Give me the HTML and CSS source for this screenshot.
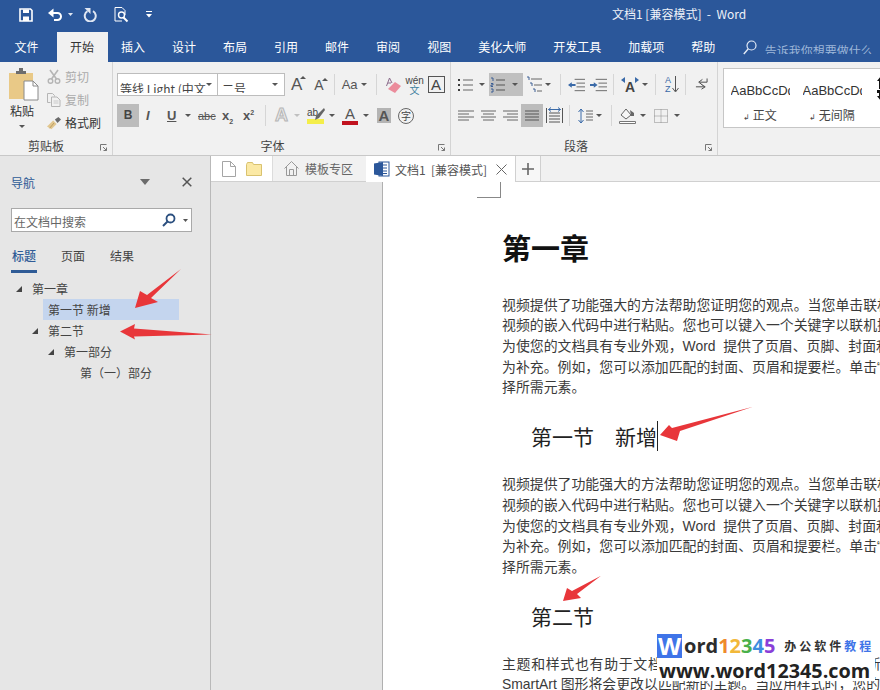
FILE: index.html
```html
<!DOCTYPE html>
<html lang="zh-CN">
<head>
<meta charset="utf-8">
<title>文档1 [兼容模式] - Word</title>
<link rel="stylesheet" href="styles.css">
</head>
<body>
<div class="app">
  <header class="titlebar">
    <div class="qat">
      <svg class="q-save" width="14" height="14" viewBox="0 0 14 14"><path d="M1 1h10.500L13 2.500V13H1z" fill="none" stroke="#fff" stroke-width="1.600"/><path d="M4 1.500h6V5H4zM4 8.500h6V13H4z" fill="#fff"/></svg>
      <svg class="q-undo" width="15" height="13" viewBox="0 0 15 13"><path d="M2 5h7.500a3.500 3.500 0 0 1 0 7H6" fill="none" stroke="#fff" stroke-width="2"/><path d="M5.500 .5v9L0 5z" fill="#fff"/></svg>
      <svg class="q-car" width="5" height="3" viewBox="0 0 5 3"><path d="M0 0h5L2.500 3z" fill="#dfe6f2"/></svg>
      <svg class="q-redo" width="14" height="14" viewBox="0 0 14 14"><path d="M4.500 3.200a5.500 5.500 0 1 0 5.500 0" fill="none" stroke="#dfe6f2" stroke-width="2"/><path d="M1.500 0h6v6z" fill="#dfe6f2"/></svg>
      <svg class="q-prev" width="15" height="16" viewBox="0 0 15 16"><path d="M1 .5h7l3 3V8M1 .5v13.500h7" fill="none" stroke="#fff"/><circle cx="7.500" cy="8" r="3" fill="none" stroke="#fff" stroke-width="1.400"/><path d="M9.500 10.500l4 4" stroke="#fff" stroke-width="2"/></svg>
      <svg class="q-cust" width="6" height="7" viewBox="0 0 6 7"><path d="M0 .5h6" stroke="#fff"/><path d="M0 3h6L3 6.500z" fill="#fff"/></svg>
    </div>
    <div class="doc-title">文档1 [兼容模式] &nbsp;-&nbsp; Word</div>
  </header>

  <nav class="tabs">
    <span class="tab first">文件</span><span class="tab active">开始</span><span class="tab">插入</span><span class="tab">设计</span><span class="tab">布局</span><span class="tab">引用</span><span class="tab">邮件</span><span class="tab">审阅</span><span class="tab">视图</span><span class="tab">美化大师</span><span class="tab">开发工具</span><span class="tab">加载项</span><span class="tab">帮助</span>
    <svg class="tell-icon" width="14" height="15" viewBox="0 0 14 15"><circle cx="8.500" cy="5.500" r="4.500" fill="none" stroke="#e4ebf6" stroke-width="1.200"/><path d="M5.300 8.800L.8 14" stroke="#e4ebf6" stroke-width="1.400"/></svg>
    <span class="tell">告诉我你想要做什么</span>
  </nav>

  <section class="ribbon">
    <div class="group g-clip">
      <div class="clip-body">
        <div class="paste">
          <svg class="paste-ico" width="30" height="33" viewBox="0 0 30 33"><rect x="0" y="5" width="24" height="26" fill="#e9c987"/><path d="M7 6V3h3V0h4v3h3v3z" fill="#6d6d6d"/><path d="M15 13h9l5 5v14H15z" fill="#fff" stroke="#8a8a8a"/><path d="M24 13v5h5" fill="none" stroke="#8a8a8a"/></svg>
          <span class="paste-label">粘贴</span>
          <svg class="caret" width="6" height="3" viewBox="0 0 6 3"><path d="M0 0h6L3 3z"/></svg>
        </div>
        <div class="clip-tools">
          <div class="clip-row dis">
            <svg width="14" height="15" viewBox="0 0 14 15"><path d="M3 1l6.500 9M11 1L4.500 10" stroke="#b5b5b5" stroke-width="1.600" fill="none"/><circle cx="3.500" cy="12" r="2.300" fill="none" stroke="#b5b5b5" stroke-width="1.400"/><circle cx="10.500" cy="12" r="2.300" fill="none" stroke="#b5b5b5" stroke-width="1.400"/></svg>
            <span>剪切</span>
          </div>
          <div class="clip-row dis">
            <svg width="14" height="14" viewBox="0 0 14 14"><path d="M.5.500h5l2 2v1M.5.500v9h3" fill="none" stroke="#b5b5b5"/><path d="M4.500 4h5.500l3 3v6.500H4.500z" fill="none" stroke="#b5b5b5"/><path d="M6.500 8h5M6.500 10h5" stroke="#c9c9c9"/></svg>
            <span>复制</span>
          </div>
          <div class="clip-row">
            <svg width="14" height="14" viewBox="0 0 16 14"><path d="M0 11l7-7 4 4-6 6z" fill="#e2c78f"/><path d="M9 3l4-3 3 3-4 4z" fill="#6a6a6a"/><path d="M3 13L8 7" stroke="#b6975a"/></svg>
            <span>格式刷</span>
          </div>
        </div>
      </div>
      <div class="group-label">剪贴板</div>
      <svg class="launch" width="7" height="7" viewBox="0 0 7 7"><path d="M.5 6.500V.5h6M3 3l3.500 3.500M6.500 3.500v3h-3" fill="none" stroke="#777"/></svg>
    </div>

    <div class="group g-font">
      <div class="row">
        <div class="combo c-font"><span class="combo-text">等线 Light (中文</span><svg class="caret" width="6" height="3" viewBox="0 0 6 3"><path d="M0 0h6L3 3z"/></svg></div>
        <div class="combo c-size"><span class="combo-text">二号</span><svg class="caret" width="6" height="3" viewBox="0 0 6 3"><path d="M0 0h6L3 3z"/></svg></div>
        <span class="letter big m6">A<i class="up"></i></span>
        <span class="letter mid m8">A<i class="up"></i></span>
        <span class="sep m6"></span>
        <span class="letter aa m7">Aa</span>
        <svg class="caret m3" width="6" height="3" viewBox="0 0 6 3"><path d="M0 0h6L3 3z"/></svg>
        <span class="sep m9"></span>
        <svg class="m9" width="15" height="16" viewBox="0 0 15 16"><path d="M2 12l7-7 6 4-6 7z" fill="#eb8c9c"/><path d="M.5 9L3.500 1 6 6M2 6h3" fill="none" stroke="#8a6a8a"/></svg>
        <span class="wen m6"><b>wén</b><b class="wen-zh">文</b></span>
        <span class="boxed-a m5">A</span>
      </div>
      <div class="row">
        <span class="fmt on">B</span>
        <span class="letter ital m7">I</span>
        <span class="letter und m13">U</span>
        <svg class="caret m9" width="6" height="3" viewBox="0 0 6 3"><path d="M0 0h6L3 3z"/></svg>
        <span class="letter abc m7">abc</span>
        <span class="letter script m8">x<sub>2</sub></span>
        <span class="letter script m8">x<sup>2</sup></span>
        <span class="sep m9"></span>
        <span class="letter fx m9">A</span>
        <svg class="caret faint m5" width="6" height="3" viewBox="0 0 6 3"><path d="M0 0h6L3 3z"/></svg>
        <span class="hl m7"><b>ab</b><i></i><svg class="pen" width="10" height="12" viewBox="0 0 10 12"><path d="M9 0l1 2-6 8-4 2 1-4z" fill="#666"/></svg></span>
        <svg class="caret m4" width="6" height="3" viewBox="0 0 6 3"><path d="M0 0h6L3 3z"/></svg>
        <span class="letter colour m7">A</span>
        <svg class="caret m5" width="6" height="3" viewBox="0 0 6 3"><path d="M0 0h6L3 3z"/></svg>
        <span class="letter shade m8">A</span>
        <span class="circled m7">字</span>
      </div>
      <div class="group-label">字体</div>
      <svg class="launch" width="7" height="7" viewBox="0 0 7 7"><path d="M.5 6.500V.5h6M3 3l3.500 3.500M6.500 3.500v3h-3" fill="none" stroke="#777"/></svg>
    </div>

    <div class="group g-para">
      <div class="row">
        <svg width="15" height="16" viewBox="0 0 15 16"><path d="M0 2h2v2H0zM0 7h2v2H0zM0 12h2v2H0z" fill="#3d3d3d"/><path d="M5 3h10M5 8h10M5 13h10" stroke="#666"/></svg>
        <svg class="caret m6" width="6" height="3" viewBox="0 0 6 3"><path d="M0 0h6L3 3z"/></svg>
        <span class="num-on m4"><svg width="15" height="16" viewBox="0 0 15 16"><path d="M1 1h2v3M1 6.500h2v1.500H1v1.500h2M1 12h2v3H1" fill="none" stroke="#3d5f94"/><path d="M6 3h9M6 8h9M6 13h9" stroke="#555"/></svg><svg class="caret" width="6" height="3" viewBox="0 0 6 3"><path d="M0 0h6L3 3z"/></svg></span>
        <svg class="m3" width="16" height="17" viewBox="0 0 16 17"><path d="M1 1h2v3M4 7h2v3M7 13h2v3" fill="none" stroke="#3d5f94"/><path d="M5 3h11M8 9h8M11 15h5" stroke="#666"/></svg>
        <svg class="caret m3" width="6" height="3" viewBox="0 0 6 3"><path d="M0 0h6L3 3z"/></svg>
        <span class="sep m9"></span>
        <svg class="m7" width="17" height="14" viewBox="0 0 18 14"><path d="M7 1h11M9 5h9M9 9h9M7 13h11" stroke="#666"/><path d="M0 7l4-3v2h4v2H4v2z" fill="#3a6aa8"/></svg>
        <svg class="m5" width="17" height="14" viewBox="0 0 18 14"><path d="M6 1h12M9 5h9M9 9h9M6 13h12" stroke="#666"/><path d="M8 7L4 4v2H0v2h4v2z" fill="#3a6aa8"/></svg>
        <span class="sep m6"></span>
        <span class="dir m7"><span class="dir-a"><svg width="18" height="6" viewBox="0 0 18 6"><path d="M4 0L0 3l4 3zM14 0l4 3-4 3z" fill="#3a6aa8"/></svg><b>A</b></span><svg class="caret" width="6" height="3" viewBox="0 0 6 3"><path d="M0 0h6L3 3z"/></svg></span>
        <span class="sep m7"></span>
        <span class="sort m9"><b>A<br>Z</b><svg width="7" height="17" viewBox="0 0 7 17"><path d="M3.500 0v15M.5 12l3 4 3-4" fill="none" stroke="#555"/></svg></span>
        <span class="sep m6"></span>
        <svg class="m9" width="13" height="15" viewBox="0 0 14 15"><path d="M13 1v4H5M8 2L4 5l4 3M1 10h9M7 7.500l4 2.500-4 2.500" fill="none" stroke="#444"/></svg>
      </div>
      <div class="row">
        <svg width="16" height="12" viewBox="0 0 16 12"><path d="M0 1h16M0 4h11M0 7h16M0 10h11" stroke="#666"/></svg>
        <svg class="m7" width="15" height="12" viewBox="0 0 15 12"><path d="M0 1h15M2 4h11M0 7h15M2 10h11" stroke="#666"/></svg>
        <svg class="m7" width="15" height="12" viewBox="0 0 15 12"><path d="M0 1h15M4 4h11M0 7h15M4 10h11" stroke="#666"/></svg>
        <span class="just m3"><svg width="14" height="12" viewBox="0 0 14 12"><path d="M0 1h14M0 4h14M0 7h14M0 10h14" stroke="#555"/></svg></span>
        <svg class="m3" width="17" height="17" viewBox="0 0 17 17"><path d="M.5 1v15M16.500 1v15" stroke="#555"/><path d="M3 6h11M3 9h11M3 12h11M3 15h11" stroke="#555"/><path d="M2.500 2.500h12M5 .5l-2.500 2 2.500 2M12 .5l2.500 2-2.500 2" fill="none" stroke="#3a6aa8"/></svg>
        <span class="sep m6"></span>
        <svg class="m8" width="15" height="16" viewBox="0 0 15 16"><path d="M3 1v14M.5 4L3 1l2.500 3M.5 12L3 15l2.500-3" fill="none" stroke="#3a6aa8"/><path d="M8 3h7M8 6h7M8 9h7M8 12h7" stroke="#666"/></svg>
        <svg class="caret m3" width="6" height="3" viewBox="0 0 6 3"><path d="M0 0h6L3 3z"/></svg>
        <span class="sep m9"></span>
        <svg class="m7" width="17" height="17" viewBox="0 0 17 17"><path d="M2 8l5-6 5 6-5 4z" fill="#f7f7f7" stroke="#666"/><path d="M11 3l4 3v3h-3z" fill="#666"/><path d="M.5 14.500h16v2H.5z" fill="#fff" stroke="#777"/></svg>
        <svg class="caret m4" width="6" height="3" viewBox="0 0 6 3"><path d="M0 0h6L3 3z"/></svg>
        <svg class="m8" width="14" height="14" viewBox="0 0 14 14"><path d="M.5.500h13v13H.5zM7 .5v13M.5 7h13" fill="none" stroke="#888" stroke-dasharray="1 1"/></svg>
        <svg class="caret m6" width="6" height="3" viewBox="0 0 6 3"><path d="M0 0h6L3 3z"/></svg>
      </div>
      <div class="group-label">段落</div>
      <svg class="launch" width="7" height="7" viewBox="0 0 7 7"><path d="M.5 6.500V.5h6M3 3l3.500 3.500M6.500 3.500v3h-3" fill="none" stroke="#777"/></svg>
    </div>

    <div class="gallery">
      <div class="style-item"><span class="sample">AaBbCcDd</span><span class="style-name"><i>↲</i> 正文</span></div>
      <div class="style-item"><span class="sample">AaBbCcDd</span><span class="style-name"><i>↲</i> 无间隔</span></div>
      <svg class="more-style" width="8" height="26" viewBox="0 0 8 26"><path d="M4 0L8 5H5v5h3v3H2V5H0zM0 14h6v6h2l-4 5-4-5h2v-3H0z" fill="#111"/></svg>
    </div>
  </section>

  <main class="main">
    <aside class="nav">
      <div class="nav-head">
        <span class="nav-title">导航</span>
        <svg class="nav-menu" width="10" height="6" viewBox="0 0 10 6"><path d="M0 0h10L5 6z" fill="#6b6b6b"/></svg>
        <svg class="nav-close" width="10" height="10" viewBox="0 0 10 10"><path d="M.7.7l8.600 8.600M9.300.7L.7 9.300" stroke="#555" stroke-width="1.500"/></svg>
      </div>
      <div class="search">
        <span class="search-text">在文档中搜索</span>
        <svg width="14" height="14" viewBox="0 0 14 14"><circle cx="8.500" cy="5.500" r="4" fill="none" stroke="#2b4f7f" stroke-width="1.800"/><path d="M5.500 8.500L1 13" stroke="#2b4f7f" stroke-width="2"/></svg>
        <svg class="caret" width="5" height="3" viewBox="0 0 5 3"><path d="M0 0h5L2.500 3z"/></svg>
      </div>
      <div class="nav-tabs">
        <span class="nav-tab current">标题</span><span class="nav-tab">页面</span><span class="nav-tab">结果</span>
      </div>
      <ul class="tree">
        <li class="lv1"><i class="tw"></i>第一章</li>
        <li class="lv2 selected">第一节 新增</li>
        <li class="lv2"><i class="tw"></i>第二节</li>
        <li class="lv3"><i class="tw"></i>第一部分</li>
        <li class="lv4">第（一）部分</li>
      </ul>
    </aside>

    <div class="work">
      <div class="doc-tabs">
        <div class="dt-tools">
          <svg width="14" height="16" viewBox="0 0 14 16"><path d="M.5.500h8l5 5v10H.5z" fill="#fff" stroke="#a5a5a5"/><path d="M8.500.5v5h5" fill="none" stroke="#a5a5a5"/></svg>
          <svg width="16" height="14" viewBox="0 0 16 14"><path d="M.5 13.500V2.500l1-2h5l1 2h8v11z" fill="#fbe9a5" stroke="#d9c26f"/></svg>
        </div>
        <div class="dt-tab">
          <svg width="15" height="15" viewBox="0 0 15 15"><path d="M.5 7.500L7.500.5l7 7" fill="none" stroke="#999"/><path d="M2.500 6v8.500h10V6M5.500 14.500v-6h4v6" fill="none" stroke="#999"/></svg>
          <span>模板专区</span>
        </div>
        <div class="dt-tab open">
          <svg width="16" height="16" viewBox="0 0 16 16"><rect x="5" y="1" width="10" height="14" fill="#fff" stroke="#2b579a"/><path d="M9 4h4M9 7h4M9 10h4M9 12.500h4" stroke="#2b579a"/><path d="M0 2.500l9-1.500v14L0 13.500z" fill="#2b579a"/></svg>
          <span>文档1&nbsp; [兼容模式]</span>
          <svg class="dt-x" width="11" height="11" viewBox="0 0 11 11"><path d="M.5.500l10 10M10.500.5l-10 10" stroke="#666"/></svg>
        </div>
        <div class="dt-plus"><svg width="12" height="12" viewBox="0 0 12 12"><path d="M6 0v12M0 6h12" stroke="#666" stroke-width="1.600"/></svg></div>
      </div>
      <div class="work-body">
        <div class="gutter"></div>
        <article class="page">
          <div class="crop"></div>
          <h1>第一章</h1>
          <p>视频提供了功能强大的方法帮助您证明您的观点。当您单击联机视频时，可以在想要添加的<br>视频的嵌入代码中进行粘贴。您也可以键入一个关键字以联机搜索最适合您的文档的视频。<br>为使您的文档具有专业外观，Word&nbsp; 提供了页眉、页脚、封面和文本框设计，这些设计可互<br>为补充。例如，您可以添加匹配的封面、页眉和提要栏。单击“插入”，然后从不同库中选<br>择所需元素。</p>
          <h2>第一节　<span class="cursor">新增</span></h2>
          <p>视频提供了功能强大的方法帮助您证明您的观点。当您单击联机视频时，可以在想要添加的<br>视频的嵌入代码中进行粘贴。您也可以键入一个关键字以联机搜索最适合您的文档的视频。<br>为使您的文档具有专业外观，Word&nbsp; 提供了页眉、页脚、封面和文本框设计，这些设计可互<br>为补充。例如，您可以添加匹配的封面、页眉和提要栏。单击“插入”，然后从不同库中选<br>择所需元素。</p>
          <h2>第二节</h2>
          <p><span class="spaced">主题和样式也有助于文档保持协调。当您单击设计并选择新的主题时，图片、图表或</span><br>SmartArt 图形将会更改以匹配新的主题。当应用样式时，您的标题会进行更改以匹配新的</p>
        </article>
      </div>
    </div>
  </main>

  <svg class="arrows" width="880" height="690" viewBox="0 0 880 690">
    <path d="M181 269L151 298 158 302 135 308 140 291 147 295z"/>
    <path d="M212 334.500L134 328.500 135 324 120 331.500 135 339.500 134 336.500z"/>
    <path d="M753 406.700L680 431 677 441 660 435 669 425 672 428z"/>
    <path d="M601 575.700L577 594 581 598 563 601 567 588 572 591z"/>
  </svg>

  <div class="mark">
    <div class="mark-top"><span class="w">W</span><span class="ord">ord</span><span class="n1">1</span><span class="n2">2</span><span class="n3">3</span><span class="n4">4</span><span class="n5">5</span><span class="mark-cn">办公软件<em>教程</em></span></div>
    <div class="mark-url">www.word12345.com</div>
  </div>
</div>
</body>
</html>
```
FILE: styles.css
```css
* { box-sizing: border-box; }
html, body { margin: 0; padding: 0; }
body { font-family: "Noto Sans CJK SC", "Liberation Sans", sans-serif; color: #444; background: #fff; overflow: hidden; }
svg { display: block; flex: none; }
i, em { font-style: normal; }

.app { position: relative; width: 880px; height: 690px; overflow: hidden; display: flex; flex-direction: column; }

.titlebar { height: 32px; background: #2b579a; display: flex; align-items: center; flex: none; }
.qat { display: flex; align-items: center; padding-left: 19px; padding-bottom: 3px; }
.q-undo { margin-left: 15px; }
.q-car { margin-left: 5px; }
.q-redo { margin-left: 10px; }
.q-prev { margin-left: 17px; }
.q-cust { margin-left: 17px; }
.doc-title { margin-left: 460px; color: #eef2f8; font-size: 12px; white-space: nowrap; line-height: 28px; padding-bottom: 4px; }

.tabs { height: 30px; background: #2b579a; display: flex; align-items: stretch; flex: none; padding-left: 1px; }
.tab { padding: 0 13.5px; color: #fff; font-size: 12px; line-height: 29px; white-space: nowrap; flex: none; }
.tab.first { margin-right: 4.5px; }
.tab.active { background: #f1f1f1; color: #333; }
.tell-icon { align-self: center; margin-left: 14px; }
.tell { margin-left: 8px; font-size: 12px; color: #9db6d8; height: 22px; line-height: 37px; overflow: hidden; white-space: nowrap; align-self: flex-start; }

.ribbon { height: 94px; background: #f1f1f1; border-bottom: 1px solid #c8c8c8; display: flex; flex: none; overflow: hidden; }
.group { position: relative; display: flex; flex-direction: column; height: 93px; border-right: 1px solid #d4d4d4; flex: none; }
.group-label { position: absolute; left: 0; right: 0; bottom: 0; height: 18px; line-height: 18px; font-size: 12px; text-align: center; color: #444; }
.g-clip .group-label { right: 20px; }
.g-font .group-label { right: 18px; }
.g-para .group-label { right: 16px; }
.launch { position: absolute; right: 5px; bottom: 4px; }
.caret { fill: #555; }
.caret.faint { fill: #c0c0c0; }

.g-clip { width: 113px; padding-top: 3px; }
.clip-body { display: flex; }
.paste { width: 47px; display: flex; flex-direction: column; align-items: center; padding-right: 3px; padding-top: 3px; }
.paste-ico { margin-left: 4px; }
.paste-label { font-size: 12px; line-height: 18px; margin-top: 1px; color: #333; }
.paste .caret { margin-top: 5px; }
.clip-row { display: flex; align-items: center; height: 23px; font-size: 12px; gap: 4px; color: #333; white-space: nowrap; }
.clip-row.dis { color: #ababab; }

.g-font { width: 338px; padding: 11px 0 0 4px; gap: 8px; }
.g-para { width: 267px; padding: 11px 0 0 7px; gap: 8px; }
.row { display: flex; align-items: center; height: 23px; flex: none; }

.combo { height: 23px; background: #fff; border: 1px solid #bdbdbd; display: flex; align-items: center; justify-content: space-between; padding: 0 6px 0 2px; flex: none; }
.combo .caret { flex: none; }
.c-font { width: 101px; padding-right: 5px; }
.c-size { width: 67px; border-left: none; padding-left: 4px; }
.combo-text { font-size: 12px; height: 15px; line-height: 21px; overflow: hidden; white-space: nowrap; color: #444; margin-top: 2px; }
.c-font .combo-text { width: 88px; }

.m3 { margin-left: 3px; } .m4 { margin-left: 4px; } .m5 { margin-left: 5px; } .m6 { margin-left: 6px; }
.m7 { margin-left: 7px; } .m8 { margin-left: 8px; } .m9 { margin-left: 9px; } .m13 { margin-left: 13px; }

.sep { width: 1px; height: 21px; background: #d6d6d6; flex: none; }
.letter { font-family: "Liberation Sans", sans-serif; color: #555; flex: none; position: relative; }
.big { font-size: 17px; padding-right: 4px; }
.mid { font-size: 14px; padding-right: 4px; }
.up { position: absolute; right: 0; top: 1px; border-left: 3px solid transparent; border-right: 3px solid transparent; border-bottom: 3px solid #555; }
.aa { font-size: 13px; }
.wen { display: flex; flex-direction: column; align-items: center; font-family: "Liberation Sans", sans-serif; line-height: 9px; width: 16px; flex: none; }
.wen b { font-size: 10px; font-weight: 400; color: #444; }
.wen .wen-zh { font-family: "Noto Sans CJK SC", sans-serif; color: #3f7f9f; }
.boxed-a { font-family: "Liberation Sans", sans-serif; font-size: 15px; line-height: 15px; color: #444; border: 1px solid #555; width: 17px; height: 17px; text-align: center; flex: none; }

.fmt { width: 22px; height: 23px; line-height: 23px; text-align: center; font-family: "Liberation Sans", sans-serif; font-weight: 700; font-size: 12px; flex: none; }
.on { background: #bcbcbc; color: #444; }
.ital { font-style: italic; font-weight: 700; font-size: 13px; width: 8px; }
.und { font-weight: 700; font-size: 13px; text-decoration: underline; width: 9px; }
.abc { font-size: 11px; text-decoration: line-through; width: 16px; }
.script { font-size: 13px; font-weight: 700; width: 13px; line-height: 14px; }
.script sub, .script sup { font-size: 7px; line-height: 0; }
.fx { font-size: 18px; font-weight: 700; color: #e8e8e8; -webkit-text-stroke: 1px #b5b5b5; width: 14px; }
.hl { position: relative; display: flex; flex-direction: column; align-items: flex-start; width: 18px; flex: none; }
.hl b { font-family: "Liberation Sans", sans-serif; font-size: 10px; line-height: 12px; font-weight: 400; }
.hl i { width: 17px; height: 5px; background: #f4ee4a; }
.pen { position: absolute; right: 0; top: 1px; }
.colour { font-size: 15px; line-height: 15px; width: 16px; text-align: center; border-bottom: 4px solid #c1121f; }
.shade { width: 14px; height: 15px; line-height: 15px; text-align: center; background: #b4b4b4; font-size: 15px; font-weight: 700; }
.circled { width: 16px; height: 16px; border: 1px solid #666; border-radius: 50%; font-size: 10px; line-height: 14px; text-align: center; flex: none; }

.num-on { width: 34px; height: 23px; background: #c0c0c0; display: flex; align-items: center; justify-content: space-between; padding: 0 5px 0 1px; flex: none; }
.dir { display: flex; align-items: center; gap: 3px; flex: none; width: 27px; }
.dir-a { display: flex; flex-direction: column; align-items: center; width: 18px; flex: none; }
.dir-a b { font-family: "Liberation Sans", sans-serif; font-size: 14px; line-height: 10px; margin-top: -1px; }
.sort { display: flex; align-items: center; gap: 1px; flex: none; }
.sort b { font-family: "Liberation Sans", sans-serif; font-size: 9px; line-height: 9px; color: #3a6aa8; font-weight: 400; }
.just { width: 22px; height: 23px; background: #bcbcbc; display: flex; align-items: center; justify-content: center; flex: none; }

.gallery { margin-left: 5px; margin-top: 6px; height: 60px; flex: 1; min-width: 0; background: #fff; border: 1px solid #c6c6c6; border-right: none; display: flex; overflow: hidden; padding-left: 6px; }
.style-item { width: 72px; display: flex; flex-direction: column; align-items: center; flex: none; padding-right: 12px; }
.sample { font-family: "Liberation Sans", sans-serif; font-size: 13px; width: 59px; overflow: hidden; white-space: nowrap; line-height: 18px; margin-top: 13px; color: #333; }
.style-name { font-size: 12px; line-height: 18px; margin-top: 6px; white-space: nowrap; color: #444; }
.style-name i { font-size: 8px; }
.more-style { margin-top: 7px; margin-left: 3px; }

.main { flex: 1; display: flex; min-height: 0; }
.nav { width: 211px; flex: none; background: #e6e6e6; border-right: 1px solid #b9b9b9; padding: 0 0 0 11px; }
.nav-head { height: 52px; display: flex; align-items: center; }
.nav-title { font-size: 12px; color: #2f5b96; }
.nav-menu { margin-left: 105px; }
.nav-close { margin-left: 32px; }
.search { width: 181px; height: 24px; background: #fff; border: 1px solid #a9a9a9; display: flex; align-items: center; padding-left: 2px; }
.search-text { width: 148px; font-size: 12px; color: #666; height: 16px; line-height: 19px; overflow: hidden; }
.search .caret { margin-left: 7px; }
.nav-tabs { display: flex; gap: 23px; margin-top: 13px; height: 28px; }
.nav-tab { font-size: 12px; line-height: 22px; height: 28px; padding: 0 1px; color: #444; }
.nav-tab.current { color: #2f5b96; font-weight: 500; border-bottom: 3px solid #2f5b96; }
.tree { list-style: none; margin: 5px 0 0; padding: 0; font-size: 12px; }
.tree li { height: 21px; line-height: 21px; display: flex; align-items: center; white-space: nowrap; color: #444; }
.tw { width: 0; height: 0; border-left: 6px solid transparent; border-bottom: 6px solid #444; flex: none; margin-right: 10px; }
.lv1 { padding-left: 5px; }
.lv2 { padding-left: 21px; }
.lv2.selected { margin-left: 32px; padding-left: 5px; width: 136px; background: #c4d5ee; }
.lv3 { padding-left: 37px; }
.lv4 { padding-left: 69px; }

.work { flex: 1; min-width: 0; display: flex; flex-direction: column; }
.doc-tabs { height: 26px; background: #f1f1f1; border-bottom: 1px solid #d0d0d0; display: flex; flex: none; }
.dt-tools { width: 61px; background: #fff; display: flex; align-items: center; padding-left: 11px; gap: 10px; flex: none; }
.dt-tab { display: flex; align-items: center; font-size: 12px; color: #666; white-space: nowrap; flex: none; width: 94px; padding-left: 11px; gap: 6px; border-left: 1px solid #dcdcdc; }
.dt-tab.open { width: 149px; background: #fff; height: 26px; padding-left: 8px; border-left: none; color: #555; gap: 5px; }
.dt-x { margin-left: 4px; }
.dt-plus { width: 26px; background: #f7f7f7; border-left: 1px solid #d0d0d0; border-right: 1px solid #d0d0d0; display: flex; align-items: center; justify-content: center; flex: none; }
.work-body { flex: 1; display: flex; min-height: 0; }
.gutter { width: 172px; flex: none; background: #e6e6e6; border-right: 1px solid #b0b0b0; }
.page { flex: 1; min-width: 0; background: #fff; overflow: hidden; padding-left: 119px; white-space: nowrap; }
.crop { width: 24px; height: 16px; margin-left: -25px; border-right: 1px solid #888; border-bottom: 1px solid #888; }
h1 { margin: 29px 0 27.6px; font-size: 29px; line-height: 40px; font-weight: 700; color: #111; }
h2 { margin: 23px 0; padding-left: 29px; font-size: 21px; line-height: 30px; font-weight: 400; color: #222; }
.cursor { border-right: 1px solid #222; }
p { margin: 0; font-family: "Liberation Sans", "Noto Sans CJK SC", sans-serif; font-size: 13.9px; line-height: 20.7px; color: #3a3a3a; }
.spaced { letter-spacing: .7px; }

.arrows { position: absolute; left: 0; top: 0; pointer-events: none; fill: #e8363a; }

.mark { position: absolute; left: 657px; top: 634px; width: 218px; height: 47px; background: #fff; }
.mark-top { display: flex; align-items: center; height: 24px; font-family: "Open Sans", "Liberation Sans", sans-serif; font-weight: 700; font-size: 20px; line-height: 24px; }
.w { width: 25px; height: 24px; background: #3f74e8; color: #fff; text-align: center; font-size: 24px; }
.ord { margin-left: 2px; color: #2c2c2c; }
.n1 { color: #ee8a2c; } .n2 { color: #f2b83a; } .n3 { color: #49b04a; } .n4 { color: #3d8de0; } .n5 { color: #8a3fd8; }
.mark-cn { margin-left: 9px; font-family: "Noto Sans CJK SC", sans-serif; font-size: 12px; font-weight: 700; letter-spacing: 3px; color: #333; }
.mark-cn em { color: #3f74e8; }
.mark-url { font-family: "Open Sans", "Liberation Sans", sans-serif; font-weight: 700; font-size: 19.8px; line-height: 24px; margin-top: 1px; color: #222; white-space: nowrap; padding-left: 2px; }
```
